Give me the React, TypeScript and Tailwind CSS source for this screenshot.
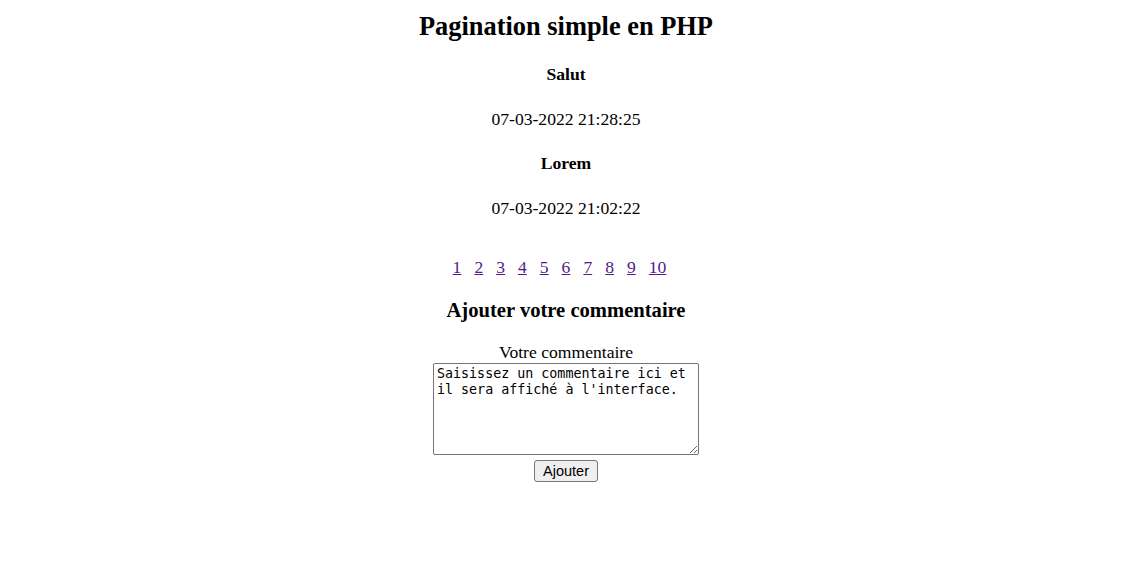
export default function App() {
  const pages = [1, 2, 3, 4, 5, 6, 7, 8, 9, 10];

  return (
    <div className="min-h-screen bg-white text-black font-['Liberation_Serif',serif] flex flex-col items-center pr-[8px]">
      <h1 className="mt-[11px] text-[26.4px] leading-[30px] font-bold">Pagination simple en PHP</h1>

      {/* Comments */}
      <h4 className="mt-[23px] text-[17.6px] leading-[20px] font-bold">Salut</h4>
      <p className="mt-[25px] text-[17.6px] leading-[20px]">07-03-2022 21:28:25</p>
      <h4 className="mt-[24px] text-[17.6px] leading-[20px] font-bold">Lorem</h4>
      <p className="mt-[25px] text-[17.6px] leading-[20px]">07-03-2022 21:02:22</p>

      {/* Pagination */}
      <div className="mt-[39px] pr-[13px] flex gap-[13px] text-[17.6px] leading-[20px]">
        {pages.map((p) => (
          <a key={p} href="#" className="text-[#551a8b] underline">
            {p}
          </a>
        ))}
      </div>

      <h3 className="mt-[21px] text-[20.6px] leading-[24px] font-bold">Ajouter votre commentaire</h3>

      <form className="mt-[20px] flex flex-col items-center">
        <label className="text-[17.6px] leading-[20px]">Votre commentaire</label>
        <textarea
          className="mt-[1px] w-[266px] h-[92px] border border-[#767676] rounded-[2px] px-[3px] py-[2px] font-['DejaVu_Sans_Mono',monospace] text-[13.33px] leading-[16px] resize"
          defaultValue={"Saisissez un commentaire ici et il sera affiché à l'interface."}
        />
        <button
          type="button"
          className="mt-[5px] w-[64px] h-[22px] bg-[#efefef] border border-[#767676] rounded-[3px] font-['Liberation_Sans',sans-serif] text-[14.5px] leading-[16px]"
        >
          Ajouter
        </button>
      </form>
    </div>
  );
}
